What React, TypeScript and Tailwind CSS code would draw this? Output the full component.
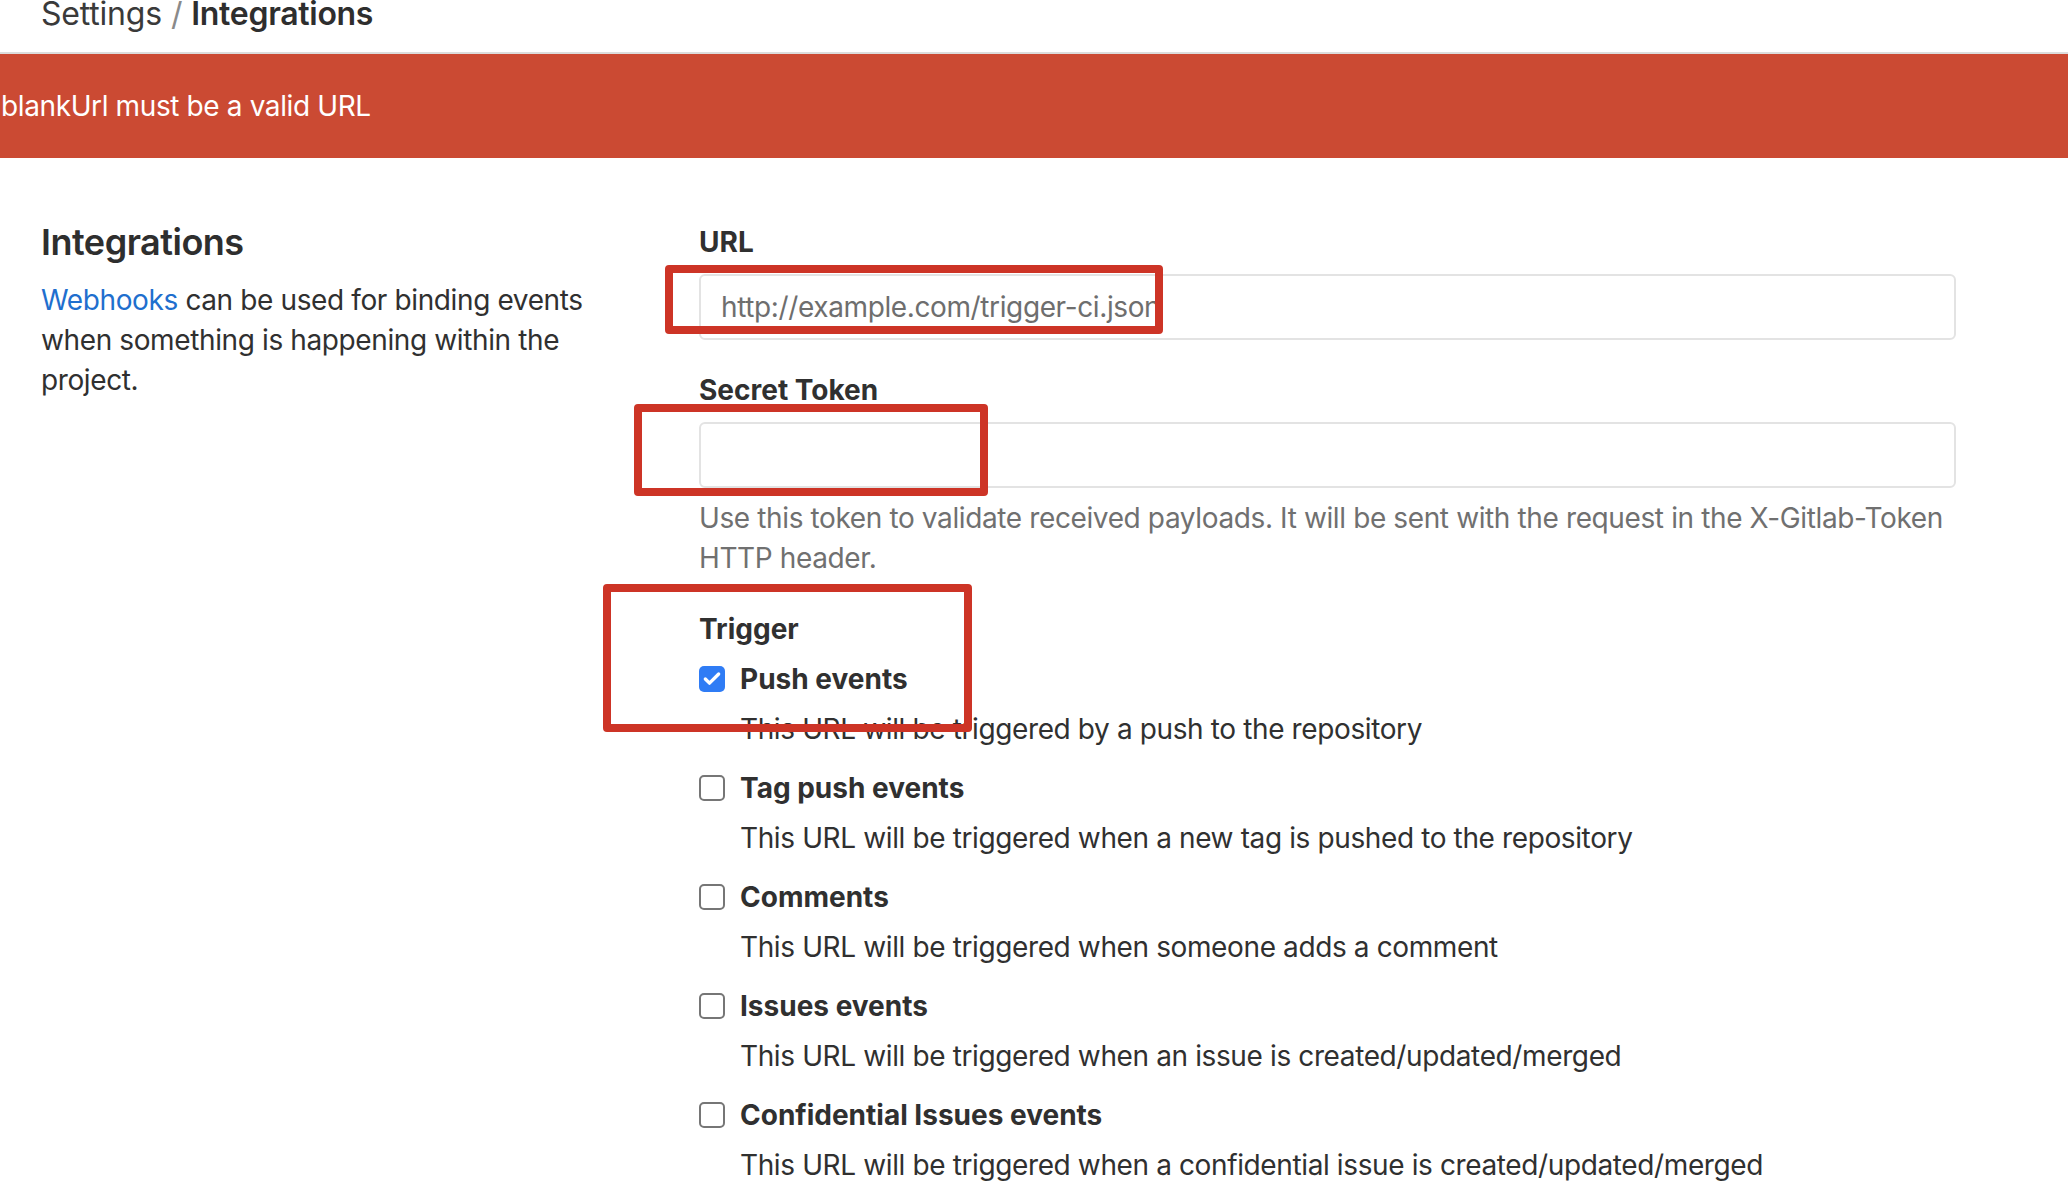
import { Check } from 'lucide-react';

const triggers = [
  { label: 'Push events', desc: 'This URL will be triggered by a push to the repository', checked: true },
  { label: 'Tag push events', desc: 'This URL will be triggered when a new tag is pushed to the repository', checked: false },
  { label: 'Comments', desc: 'This URL will be triggered when someone adds a comment', checked: false },
  { label: 'Issues events', desc: 'This URL will be triggered when an issue is created/updated/merged', checked: false },
  { label: 'Confidential Issues events', desc: 'This URL will be triggered when a confidential issue is created/updated/merged', checked: false },
];

export default function App() {
  return (
    <div className="relative w-full h-[1182px] overflow-hidden bg-white text-[#303030] font-['Inter','Liberation_Sans',sans-serif] text-[28px] leading-[40px] tracking-[-0.38px]">
      {/* Breadcrumb */}
      <div className="h-[54px] border-b-2 border-[#dcdcdc] px-[41px] flex items-start">
        <div className="-mt-[4px] text-[32px] leading-[36px] tracking-[-0.2px]">
          <span className="text-[#3a3a3a]">Settings</span>
          <span className="text-[#8a8a8a] mx-[9px]">/</span>
          <span className="font-semibold text-[#2e2e2e] tracking-[-0.3px]">Integrations</span>
        </div>
      </div>

      {/* Error flash */}
      <div className="h-[104px] bg-[#cb4a33] flex items-center pl-[1px] text-white">
        blankUrl must be a valid URL
      </div>

      <div className="flex px-[41px] pt-[60px]">
        {/* Left column */}
        <div className="w-[658px] shrink-0 pr-[64px]">
          <h4 className="text-[36px] leading-[48px] font-semibold tracking-[-0.5px] text-[#2e2e2e]">Integrations</h4>
          <p className="mt-[14px]">
            <a className="text-[#1f6fce]">Webhooks</a> can be used for binding events when something is happening within the project.
          </p>
        </div>

        {/* Right column */}
        <div className="w-[1257px] shrink-0 mt-[4px]">
          <label className="block font-bold tracking-normal">URL</label>
          <div className="mt-[12px] h-[66px] border-2 border-[#e3e3e3] rounded-[6px] flex items-center pl-[20px] text-[#6e6e6e]">
            http://example.com/trigger-ci.json
          </div>

          <label className="block font-bold tracking-normal mt-[30px]">Secret Token</label>
          <div className="mt-[12px] h-[66px] border-2 border-[#e3e3e3] rounded-[6px]"></div>
          <p className="mt-[10px] text-[#707070]">
            Use this token to validate received payloads. It will be sent with the request in the X-Gitlab-Token HTTP header.
          </p>

          <label className="block font-bold tracking-normal mt-[31px]">Trigger</label>
          <div className="mt-[10px] flex flex-col gap-[19px]">
            {triggers.map((t) => (
              <div key={t.label} className="flex flex-col gap-[10px]">
                <div className="flex items-center gap-[15px]">
                  {t.checked ? (
                    <span className="w-[26px] h-[26px] rounded-[5px] bg-[#2f7cf5] flex items-center justify-center">
                      <Check className="w-[20px] h-[20px] text-white" strokeWidth={4} />
                    </span>
                  ) : (
                    <span className="w-[26px] h-[26px] rounded-[5px] border-2 border-[#767676] bg-white"></span>
                  )}
                  <span className="font-bold tracking-normal">{t.label}</span>
                </div>
                <div className="pl-[41px]">{t.desc}</div>
              </div>
            ))}
          </div>
        </div>
      </div>

      {/* Annotation boxes */}
      <div className="absolute left-[665px] top-[265px] w-[498px] h-[69px] border-[8px] border-[#cd3426] rounded-[4px]"></div>
      <div className="absolute left-[634px] top-[404px] w-[354px] h-[92px] border-[8px] border-[#cd3426] rounded-[4px]"></div>
      <div className="absolute left-[603px] top-[584px] w-[369px] h-[148px] border-[8px] border-[#cd3426] rounded-[4px]"></div>
    </div>
  );
}
